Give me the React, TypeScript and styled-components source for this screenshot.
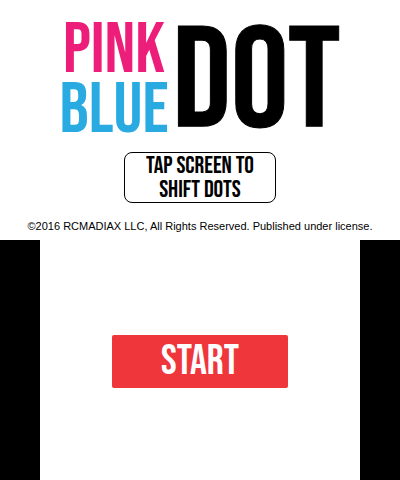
import React from "react";
import styled, { createGlobalStyle } from "styled-components";

const display = '"Bebas Neue", "Open Sans Condensed", "Roboto Condensed", sans-serif';

const GlobalStyle = createGlobalStyle`
  *, *::before, *::after { box-sizing: border-box; }
  body { margin: 0; background: #000; }
`;

const Page = styled.div`
  display: grid;
  grid-template-rows: 1fr 1fr;
  min-height: 100vh;
`;

const TopScreen = styled.header`
  display: flex;
  flex-direction: column;
  align-items: center;
  padding: 21px 8px 4px;
  background: #fff;
`;

const Logo = styled.h1`
  display: flex;
  align-items: flex-start;
  gap: 4px;
  margin: 0;
  font-family: ${display};
  font-weight: 400;
`;

const Stack = styled.span`
  display: flex;
  flex-direction: column;
  align-items: center;
  font-size: 72px;
  line-height: 60px;
`;

const Word = styled.span<{ $color: string }>`
  color: ${(p) => p.$color};
`;

const BigWord = styled.span`
  color: #000;
  font-size: 144px;
  line-height: 126px;
  -webkit-text-stroke: 1px #000;
`;

const Hint = styled.p`
  width: 152px;
  margin: 5px 0 0;
  padding: 1px 16px 0;
  border: 1px solid #000;
  border-radius: 8px;
  color: #000;
  font: 400 24px/24px ${display};
  text-align: center;
`;

const Legal = styled.p`
  margin: 15px 0 0;
  color: #000;
  font: 11px/16px "Liberation Sans", Arial, sans-serif;
  white-space: nowrap;
`;

const BottomScreen = styled.main`
  display: flex;
  align-items: center;
  justify-content: center;
  margin: 0 10%;
  padding-top: 3px;
  background: #fff;
`;

const StartButton = styled.button`
  width: 176px;
  padding: 3px 0 2px;
  border: 0;
  border-radius: 2px;
  background: #ef363b;
  color: #fff;
  font: 400 42px/48px ${display};
  cursor: pointer;
`;

export default function App() {
  return (
    <Page>
      <GlobalStyle />
      <TopScreen>
        <Logo>
          <Stack>
            <Word $color="#ed1e79">PINK</Word>
            <Word $color="#29abe2">BLUE</Word>
          </Stack>
          <BigWord>DOT</BigWord>
        </Logo>
        <Hint>TAP SCREEN TO SHIFT DOTS</Hint>
        <Legal>©2016 RCMADIAX LLC, All Rights Reserved. Published under license.</Legal>
      </TopScreen>
      <BottomScreen>
        <StartButton type="button">START</StartButton>
      </BottomScreen>
    </Page>
  );
}
